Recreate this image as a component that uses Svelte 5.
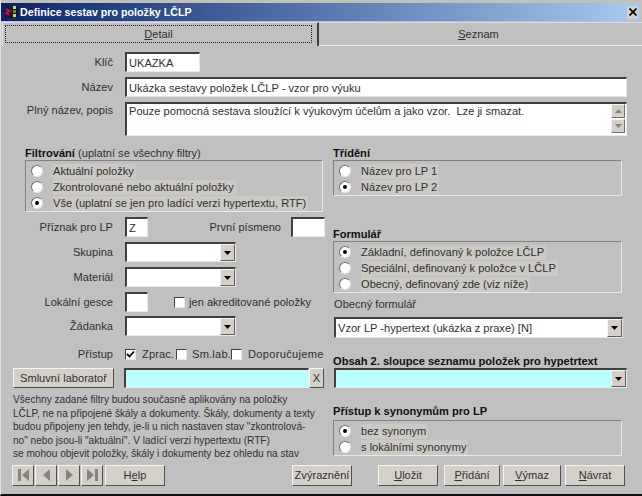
<script>
  const filters = [
    { text: 'Aktuální položky' },
    { text: 'Zkontrolované nebo aktuální položky' },
    { text: 'Vše (uplatní se jen pro ladící verzi hypertextu, RTF)', on: true }
  ];
  const sorting = [
    { text: 'Název pro LP 1' },
    { text: 'Název pro LP 2', on: true }
  ];
  const forms = [
    { text: 'Základní, definovaný k položce LČLP', on: true },
    { text: 'Speciální, definovaný k položce v LČLP' },
    { text: 'Obecný, definovaný zde (viz níže)' }
  ];
  const synonyms = [
    { text: 'bez synonym', on: true },
    { text: 's lokálními synonymy' }
  ];
</script>

{#snippet group(items, cls)}
  <div class="group {cls}">
    {#each items as item}
      <div class="radio-row">
        <span class="radio" class:on={item.on}></span>
        <span class="radio-text">{item.text}</span>
      </div>
    {/each}
  </div>
{/snippet}

{#snippet arrow()}
  <span class="drop">
    <svg width="7" height="4" viewBox="0 0 7 4"><path d="M0 0h7L3.5 4z" fill="#000" /></svg>
  </span>
{/snippet}

{#snippet combo(cls, text)}
  <div class="field combo {cls}">
    <span class="value">{text}</span>
    {@render arrow()}
  </div>
{/snippet}

<div class="win">
  <div class="title">
    <svg class="logo" width="14" height="14" viewBox="0 0 14 14">
      <rect x="0" y="1" width="14" height="12" fill="#1a1440" />
      <path d="M1 4l4 2-4 2 3 2" stroke="#c8102e" stroke-width="2" fill="none" />
      <rect x="8" y="1" width="3" height="3" fill="#e8d820" />
      <rect x="8" y="5" width="3" height="3" fill="#20b040" />
      <rect x="8" y="9" width="3" height="3" fill="#e8d820" />
    </svg>
    <span class="title-text">Definice sestav pro položky LČLP</span>
    <span class="close">
      <svg width="8" height="8" viewBox="0 0 8 8"><path d="M0.5 0.5l7 7M7.5 0.5l-7 7" stroke="#000" stroke-width="1.7" /></svg>
    </span>
  </div>

  <div class="tabs">
    <div class="tab active"><span class="focus"><u>D</u>etail</span></div>
    <div class="tab last"><span><u>S</u>eznam</span></div>
  </div>

  <div class="top">
    <div class="row">
      <span class="lbl">Klíč</span>
      <div class="field w-key"><span class="value">UKAZKA</span></div>
    </div>
    <div class="row">
      <span class="lbl">Název</span>
      <div class="field w-full"><span class="value">Ukázka sestavy položek LČLP - vzor pro výuku</span></div>
    </div>
    <div class="row memo-row">
      <span class="lbl">Plný název, popis</span>
      <div class="field w-full memo">
        <span class="value">Pouze pomocná sestava sloužící k výukovým účelům a jako vzor.  Lze ji smazat.</span>
        <div class="spin">
          <span class="spin-btn"><svg width="7" height="4" viewBox="0 0 7 4"><path d="M0 4h7L3.5 0z" fill="#85857d" /></svg></span>
          <span class="spin-btn"><svg width="7" height="4" viewBox="0 0 7 4"><path d="M0 0h7L3.5 4z" fill="#85857d" /></svg></span>
        </div>
      </div>
    </div>
  </div>

  <div class="columns">
    <div class="left">
      <div class="heading"><b>Filtrování</b> (uplatní se všechny filtry)</div>
      {@render group(filters, 'g-filter')}

      <div class="row">
        <span class="lbl">Příznak pro LP</span>
        <div class="field w-tiny"><span class="value">Z</span></div>
        <span class="first-lbl">První písmeno</span>
        <div class="field w-first"></div>
      </div>
      <div class="row">
        <span class="lbl">Skupina</span>
        {@render combo('w-combo', '')}
      </div>
      <div class="row">
        <span class="lbl">Materiál</span>
        {@render combo('w-combo', '')}
      </div>
      <div class="row">
        <span class="lbl">Lokální gesce</span>
        <div class="field w-tiny"></div>
        <span class="box accredited"></span>
        <span class="box-text">jen akreditované položky</span>
      </div>
      <div class="row row-tight">
        <span class="lbl">Žádanka</span>
        {@render combo('w-combo', '')}
      </div>
      <div class="row access">
        <span class="lbl">Přístup</span>
        <span class="box">
          <svg width="9" height="9" viewBox="0 0 9 9"><path d="M1 4l2.5 2.5L8 1.5" stroke="#000" stroke-width="1.8" fill="none" /></svg>
        </span>
        <span class="acc-a">Zprac.</span>
        <span class="box"></span>
        <span class="acc-b">Sm.lab.</span>
        <span class="box"></span>
        <span class="acc-c">Doporučujeme</span>
      </div>
      <div class="row lab">
        <button class="btn lab-btn">Smluvní laboratoř</button>
        <div class="field cyan w-lab"></div>
        <button class="btn x-btn">X</button>
      </div>
      <p class="note">
        Všechny zadané filtry budou současně aplikovány na položky<br />
        LČLP, ne na připojené škály a dokumenty. Škály, dokumenty a texty<br />
        budou připojeny jen tehdy, je-li u nich nastaven stav "zkontrolová-<br />
        no" nebo jsou-li "aktuální". V ladící verzi hypertextu (RTF)<br />
        se mohou objevit položky, škály i dokumenty bez ohledu na stav
      </p>
    </div>

    <div class="right">
      <div class="heading"><b>Třídění</b></div>
      {@render group(sorting, 'g-right')}

      <div class="heading h-form"><b>Formulář</b></div>
      {@render group(forms, 'g-right')}

      <div class="heading h-general">Obecný formulář</div>
      {@render combo('w-general', 'Vzor LP -hypertext (ukázka z praxe) [N]')}

      <div class="heading h-content"><b>Obsah 2. sloupce seznamu položek pro hypetrtext</b></div>
      {@render combo('w-content cyan', '')}

      <div class="heading h-syn"><b>Přístup k synonymům pro LP</b></div>
      {@render group(synonyms, 'g-right')}
    </div>
  </div>

  <div class="footer">
    <button class="btn nav" aria-label="První">
      <svg width="11" height="12" viewBox="0 0 11 12"><path d="M0 0h3v12H0zM11 0v12L4 6z" fill="#85857d" /></svg>
    </button>
    <button class="btn nav" aria-label="Předchozí">
      <svg width="7" height="12" viewBox="0 0 7 12"><path d="M7 0v12L0 6z" fill="#85857d" /></svg>
    </button>
    <button class="btn nav" aria-label="Další">
      <svg width="7" height="12" viewBox="0 0 7 12"><path d="M0 0v12l7-6z" fill="#85857d" /></svg>
    </button>
    <button class="btn nav" aria-label="Poslední">
      <svg width="11" height="12" viewBox="0 0 11 12"><path d="M8 0h3v12H8zM0 0v12l7-6z" fill="#85857d" /></svg>
    </button>
    <button class="btn help">H<u>e</u>lp</button>
    <button class="btn highlight">Zvýraznění</button>
    <button class="btn save"><u>U</u>ložit</button>
    <button class="btn add"><u>P</u>řidání</button>
    <button class="btn del"><u>V</u>ýmaz</button>
    <button class="btn back"><u>N</u>ávrat</button>
  </div>
</div>

<style>
  :global(body) {
    margin: 0;
    background: #c0c0c0;
  }

  .win {
    width: 642px;
    height: 496px;
    box-sizing: border-box;
    padding-top: 3px;
    overflow: hidden;
    background: #c0c0c0;
    border-left: 1px solid #e4e4e4;
    border-bottom: 2px solid #101010;
    color: #303030;
    font: 11.1px "Liberation Sans", Arial, sans-serif;
  }

  .title {
    display: flex;
    align-items: center;
    height: 18px;
    margin-right: 2px;
    padding-left: 4px;
    background: linear-gradient(90deg, #0a246a, #a6caf0);
    color: #fff;
    font-weight: bold;
    font-size: 10.7px;
  }

  .logo {
    flex: none;
    margin-right: 1px;
  }

  .title-text {
    flex: 1;
  }

  .close {
    display: flex;
    align-items: center;
    justify-content: center;
    width: 11px;
    height: 13px;
    margin-right: 2px;
    background: #d4d0c8;
  }

  .tabs {
    display: flex;
    height: 25px;
  }

  .tab {
    flex: 1;
    display: flex;
    align-items: center;
    justify-content: center;
    box-sizing: border-box;
    margin-top: 1px;
    border-top: 1px solid #dcdcdc;
    border-bottom: 1px solid #ececec;
  }

  .tab.last {
    padding-right: 4px;
  }

  .tab.active {
    flex: none;
    width: 317px;
    margin-left: 1px;
    padding: 2px 5px 3px 2px;
    border-left: 1px solid #e8e8e8;
    border-right: 2px solid #404040;
    border-bottom: none;
  }

  .focus {
    flex: 1;
    align-self: stretch;
    display: flex;
    align-items: center;
    justify-content: center;
    white-space: pre;
    border: 1px dotted #202020;
  }

  .top {
    padding-top: 6px;
  }

  .row {
    display: flex;
    align-items: center;
    height: 20px;
    margin-top: 5px;
  }

  .top .row:first-child {
    margin-top: 0;
  }

  .lbl {
    flex: none;
    width: 112px;
    margin-right: 12px;
    text-align: right;
    white-space: nowrap;
  }

  .memo-row {
    align-items: flex-start;
    height: 34px;
  }

  .memo-row .lbl {
    margin-top: 2px;
  }

  .field {
    position: relative;
    display: flex;
    align-items: center;
    box-sizing: border-box;
    height: 20px;
    background: #fff;
    border-top: 2px solid #404040;
    border-left: 2px solid #404040;
    border-right: 1px solid #e8e8e8;
    border-bottom: 1px solid #e8e8e8;
  }

  .value {
    padding-left: 2px;
    white-space: pre;
  }

  .w-key { width: 75px; }
  .w-full { width: 502px; }
  .w-tiny { width: 23px; }
  .w-first { width: 34px; }
  .w-combo { width: 111px; }
  .w-lab { width: 185px; }
  .w-general { width: 289px; height: 21px; margin-left: 1px; }
  .w-content { width: 293px; margin-left: 1px; }

  .cyan {
    background: #b9ffff;
  }

  .memo {
    align-items: flex-start;
    height: 34px;
    padding-top: 1px;
  }

  .spin {
    position: absolute;
    top: 0;
    right: 1px;
    display: flex;
    flex-direction: column;
    gap: 1px;
  }

  .spin-btn {
    display: flex;
    align-items: center;
    justify-content: center;
    width: 14px;
    height: 14px;
    background: #d4d0c8;
    border: 1px solid;
    border-color: #f4f4f4 #707070 #707070 #f4f4f4;
    box-sizing: border-box;
  }

  .combo {
    justify-content: space-between;
  }

  .drop {
    display: flex;
    align-items: center;
    justify-content: center;
    align-self: stretch;
    flex: none;
    width: 15px;
    background: #d4d0c8;
    border: 1px solid;
    border-color: #f4f4f4 #606060 #606060 #f4f4f4;
    box-sizing: border-box;
  }

  .columns {
    display: flex;
    padding-top: 10px;
  }

  .left {
    flex: none;
    width: 329px;
  }

  .right {
    flex: 1;
    padding-left: 3px;
  }

  .heading {
    height: 14px;
    line-height: 14px;
    white-space: nowrap;
  }

  .left .heading {
    margin-left: 24px;
  }

  .heading b {
    color: #101010;
  }

  .h-form { margin-top: 31px; }
  .h-general { margin: 4px 0 6px 1px; }
  .h-content { margin-top: 16px; }
  .h-syn { margin-top: 16px; margin-bottom: 2px; }

  .group {
    box-sizing: border-box;
    padding: 2px 0 0 5px;
    border: 1px solid;
    border-color: #808080 #e8e8e8 #e8e8e8 #808080;
  }

  .g-filter {
    width: 298px;
    margin-left: 24px;
  }

  .g-right {
    width: 289px;
  }

  .radio-row {
    display: flex;
    align-items: center;
    height: 16px;
  }

  .radio {
    flex: none;
    position: relative;
    box-sizing: border-box;
    width: 12px;
    height: 12px;
    margin-right: 10px;
    border-radius: 50%;
    background: #fff;
    border: 1px solid;
    border-color: #707070 #e8e8e8 #e8e8e8 #707070;
  }

  .radio.on::after {
    content: "";
    position: absolute;
    top: 3px;
    left: 3px;
    width: 4px;
    height: 4px;
    border-radius: 50%;
    background: #000;
  }

  .radio-text {
    padding-right: 2px;
    line-height: 15px;
    background: #cbc9c3;
    white-space: nowrap;
  }

  .first-lbl {
    flex: none;
    width: 73px;
    margin: 0 10px 0 60px;
    text-align: right;
    white-space: nowrap;
  }

  .box {
    flex: none;
    display: flex;
    align-items: center;
    justify-content: center;
    box-sizing: border-box;
    width: 11px;
    height: 11px;
    background: #fff;
    border: 1px solid;
    border-top-color: #404040;
    border-left-color: #404040;
    border-right-color: #e8e8e8;
    border-bottom-color: #e8e8e8;
  }

  .accredited { margin-left: 26px; }
  .box-text { margin-left: 4px; white-space: nowrap; }

  .row-tight { margin-top: 4px; }
  .access { height: 16px; margin-top: 10px; }
  .acc-a { margin: 0 2px 0 6px; letter-spacing: 0.1px; }
  .acc-b { margin: 0 0 0 5px; letter-spacing: 0.2px; }
  .acc-c { margin-left: 6px; letter-spacing: 0.3px; }

  .lab {
    margin-top: 6px;
  }

  .btn {
    display: inline-flex;
    align-items: center;
    justify-content: center;
    box-sizing: border-box;
    height: 20px;
    padding: 0;
    background: #d4d0c8;
    color: #303030;
    font: inherit;
    border: 1px solid;
    border-color: #f4f4f4 #505050 #505050 #f4f4f4;
  }

  .lab-btn {
    width: 101px;
    margin: 0 10px 0 12px;
  }

  .x-btn {
    width: 15px;
  }

  .note {
    margin: 5px 0 0 12px;
    font-size: 10.1px;
    line-height: 13.5px;
    white-space: nowrap;
  }

  .footer {
    display: flex;
    align-items: center;
    margin-top: 4px;
    padding-left: 11px;
  }

  .footer .btn {
    flex: none;
    height: 21px;
  }

  .nav {
    width: 22px;
    margin-right: 1px;
  }

  .help { width: 60px; margin-left: 1px; }
  .highlight { width: 60px; margin-left: 127px; }
  .save { width: 60px; margin-left: 26px; }
  .add { width: 56px; margin-left: 6px; }
  .del { width: 58px; margin-left: 3px; }
  .back { width: 60px; margin-left: 4px; }
</style>
